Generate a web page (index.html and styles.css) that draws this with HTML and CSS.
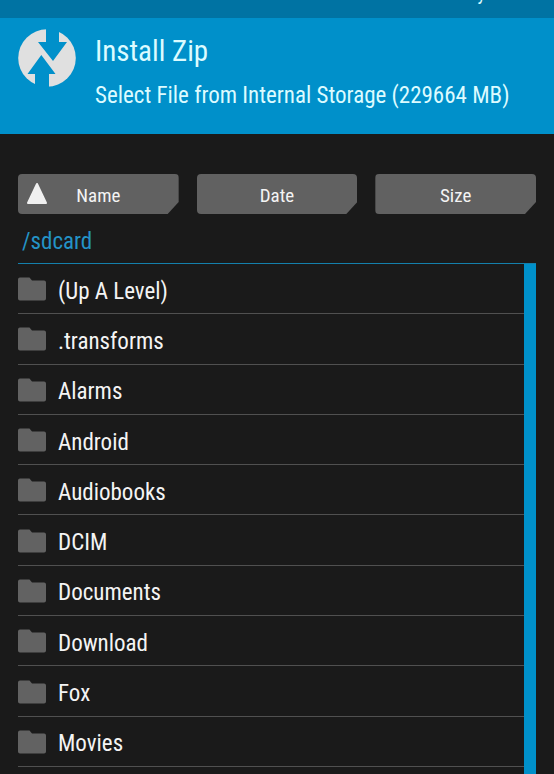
FILE: index.html
```html
<!DOCTYPE html>
<html lang="en">
<head>
<meta charset="utf-8">
<meta name="viewport" content="width=device-width, initial-scale=1">
<title>Install Zip</title>
<link rel="stylesheet" href="styles.css">
</head>
<body>
<svg width="0" height="0" class="defs" aria-hidden="true">
  <symbol id="folder" viewBox="0 0 28 24">
    <path d="M2 0.500H11.500L14 3.500H26Q28 3.500 28 5.500V21.500Q28 23.500 26 23.500H2Q0 23.500 0 21.500V2.500Q0 .5 2 .5Z"/>
  </symbol>
</svg>
<div class="status"><span>CPU: 38 °C</span><span>10:24</span><span>Battery: 74%</span></div>
<header class="header">
  <svg class="logo" viewBox="0 0 58 58" aria-hidden="true">
    <circle class="disc" cx="29" cy="29" r="28.800"/>
    <path class="arrows" d="M28 -1H41V13H49L35 32 20 13H28ZM23.300 26L37.500 45H31V59H17V45H9.500Z"/>
  </svg>
  <div class="titles">
    <h1>Install Zip</h1>
    <p>Select File from Internal Storage (229664 MB)</p>
  </div>
</header>
<main class="content">
  <div class="sort">
    <button class="sort-btn" type="button"><svg class="arrow" viewBox="0 0 22 23" aria-hidden="true"><path d="M11 2L20 21H2Z"/></svg>Name</button>
    <button class="sort-btn" type="button">Date</button>
    <button class="sort-btn" type="button">Size</button>
  </div>
  <div class="path">/sdcard</div>
  <div class="browser">
    <ul class="files">
      <li><svg class="folder"><use href="#folder"/></svg>(Up A Level)</li>
      <li><svg class="folder"><use href="#folder"/></svg>.transforms</li>
      <li><svg class="folder"><use href="#folder"/></svg>Alarms</li>
      <li><svg class="folder"><use href="#folder"/></svg>Android</li>
      <li><svg class="folder"><use href="#folder"/></svg>Audiobooks</li>
      <li><svg class="folder"><use href="#folder"/></svg>DCIM</li>
      <li><svg class="folder"><use href="#folder"/></svg>Documents</li>
      <li><svg class="folder"><use href="#folder"/></svg>Download</li>
      <li><svg class="folder"><use href="#folder"/></svg>Fox</li>
      <li><svg class="folder"><use href="#folder"/></svg>Movies</li>
    </ul>
    <div class="scrollbar"></div>
  </div>
</main>
</body>
</html>
```

FILE: styles.css
```css
* { box-sizing: border-box; }
body {
  margin: 0;
  min-height: 100vh;
  display: flex;
  flex-direction: column;
  background: #1a1a1a;
  color: #f4f4f4;
  font-family: "Roboto Condensed", "Liberation Sans Narrow", Roboto, sans-serif;
  font-size: 23px;
}
h1, p, ul { margin: 0; padding: 0; font-weight: 400; }
.defs { position: absolute; }
.status {
  display: flex;
  justify-content: space-between;
  height: 18px;
  padding: 0 29px 0 20px;
  overflow: hidden;
  background: #0073a3;
  color: #dcfbff;
  font-size: 19px;
  line-height: 20px;
}
.status span { margin-top: -16px; }
.header {
  display: flex;
  gap: 19px;
  height: 116px;
  padding: 11px 18px;
  background: #0090ca;
  color: #dcfbff;
}
.logo { width: 58px; height: 58px; flex: none; }
.disc { fill: #e0e0e0; }
.arrows { fill: #0090ca; }
h1 { font-size: 29px; line-height: 44px; }
.titles p { line-height: 46px; white-space: nowrap; }
.content {
  flex: 1;
  display: flex;
  flex-direction: column;
  padding: 40px 18px 0;
}
.sort { display: grid; grid-template-columns: repeat(3, 1fr); gap: 18px; }
.sort-btn {
  display: grid;
  place-items: center;
  position: relative;
  height: 40px;
  padding: 2px 0 0;
  border: 0;
  border-radius: 4px;
  background: #616161;
  color: #f4f4f4;
  font: inherit;
  font-size: 19px;
  clip-path: polygon(0 0, 100% 0, 100% 28px, calc(100% - 11px) 100%, 0 100%);
}
.arrow { position: absolute; left: 8px; top: 8px; width: 22px; height: 23px; fill: #f0f0f0; stroke: #f0f0f0; stroke-width: 2; stroke-linejoin: round; }
.path { height: 49px; padding: 4px; line-height: 48px; color: #2493c6; }
.browser { flex: 1; display: flex; border-top: 1px solid #1480ac; }
.files { flex: 1; display: grid; grid-auto-rows: minmax(50px, 1fr); list-style: none; padding-bottom: 7px; }
.files li { display: flex; align-items: center; gap: 12px; padding-top: 5px; border-bottom: 1px solid #505050; }
.folder { width: 28px; height: 24px; margin-bottom: 4px; fill: #626262; }
.scrollbar { width: 12px; background: #0090ca; }
```
